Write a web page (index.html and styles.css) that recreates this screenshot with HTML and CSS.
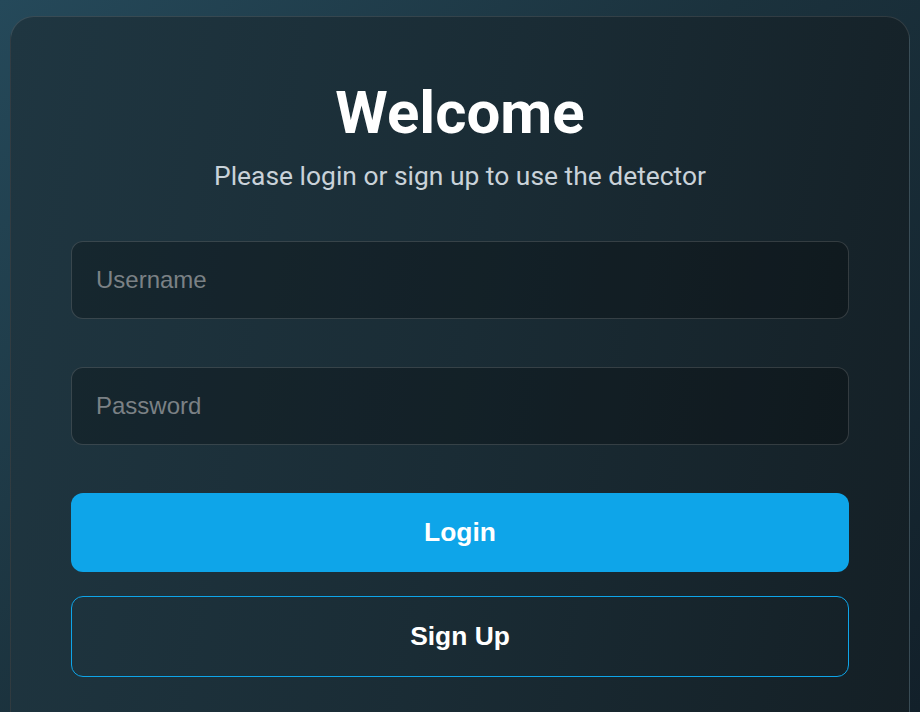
FILE: index.html
```html
<!DOCTYPE html>
<html lang="en">
<head>
<meta charset="utf-8">
<title>Welcome</title>
<link rel="stylesheet" href="styles.css">
</head>
<body>
<main class="page">
  <section class="card">
    <h1 class="title">Welcome</h1>
    <p class="subtitle">Please login or sign up to use the detector</p>
    <form class="form">
      <input class="field" type="text" placeholder="Username">
      <input class="field" type="password" placeholder="Password">
      <div class="actions">
        <button class="btn btn-primary" type="button">Login</button>
        <button class="btn btn-outline" type="button">Sign Up</button>
      </div>
    </form>
  </section>
</main>
</body>
</html>
```

FILE: styles.css
```css
* { box-sizing: border-box; }
html, body { margin: 0; height: 100%; }
body {
  background: linear-gradient(135deg, #25495a 0%, #1b323d 45%, #12202a 100%);
  font-family: Roboto, "Liberation Sans", Arial, sans-serif;
  overflow: hidden;
}
.page {
  padding: 16px 10px 0;
}
.card {
  border: 1px solid rgba(255, 255, 255, 0.12);
  border-radius: 24px;
  background: linear-gradient(100deg, #1f3641 0%, #1a2c35 50%, #141f25 100%);
  padding: 60px 60px 60px;
  min-height: 760px;
}
.title {
  margin: 0;
  text-align: center;
  color: #ffffff;
  font-family: Roboto, sans-serif;
  font-weight: 700;
  font-size: 60px;
  line-height: 1.2;
}
.subtitle {
  margin: 8px 0 0;
  text-align: center;
  color: #c9d2d9;
  font-family: Roboto, sans-serif;
  font-size: 26.4px;
  line-height: 1.5;
}
.form {
  margin-top: 44px;
  display: flex;
  flex-direction: column;
}
.field {
  display: block;
  width: 100%;
  height: 78px;
  padding: 0 24px;
  border: 1px solid rgba(255, 255, 255, 0.15);
  border-radius: 12px;
  background: rgba(0, 0, 0, 0.25);
  color: #ffffff;
  font-family: "Liberation Sans", Arial, sans-serif;
  font-size: 24px;
  outline: none;
  margin-bottom: 48px;
}
.field::placeholder { color: #7b8185; }
.actions {
  display: flex;
  flex-direction: column;
  gap: 24px;
}
.btn {
  display: block;
  width: 100%;
  border-radius: 12px;
  font-family: "Liberation Sans", Arial, sans-serif;
  font-weight: 700;
  font-size: 26.4px;
  color: #ffffff;
  cursor: pointer;
}
.btn-primary {
  height: 79px;
  border: none;
  background: #0ea5e9;
}
.btn-outline {
  height: 81px;
  border: 1px solid #0ea5e9;
  background: transparent;
}
```
